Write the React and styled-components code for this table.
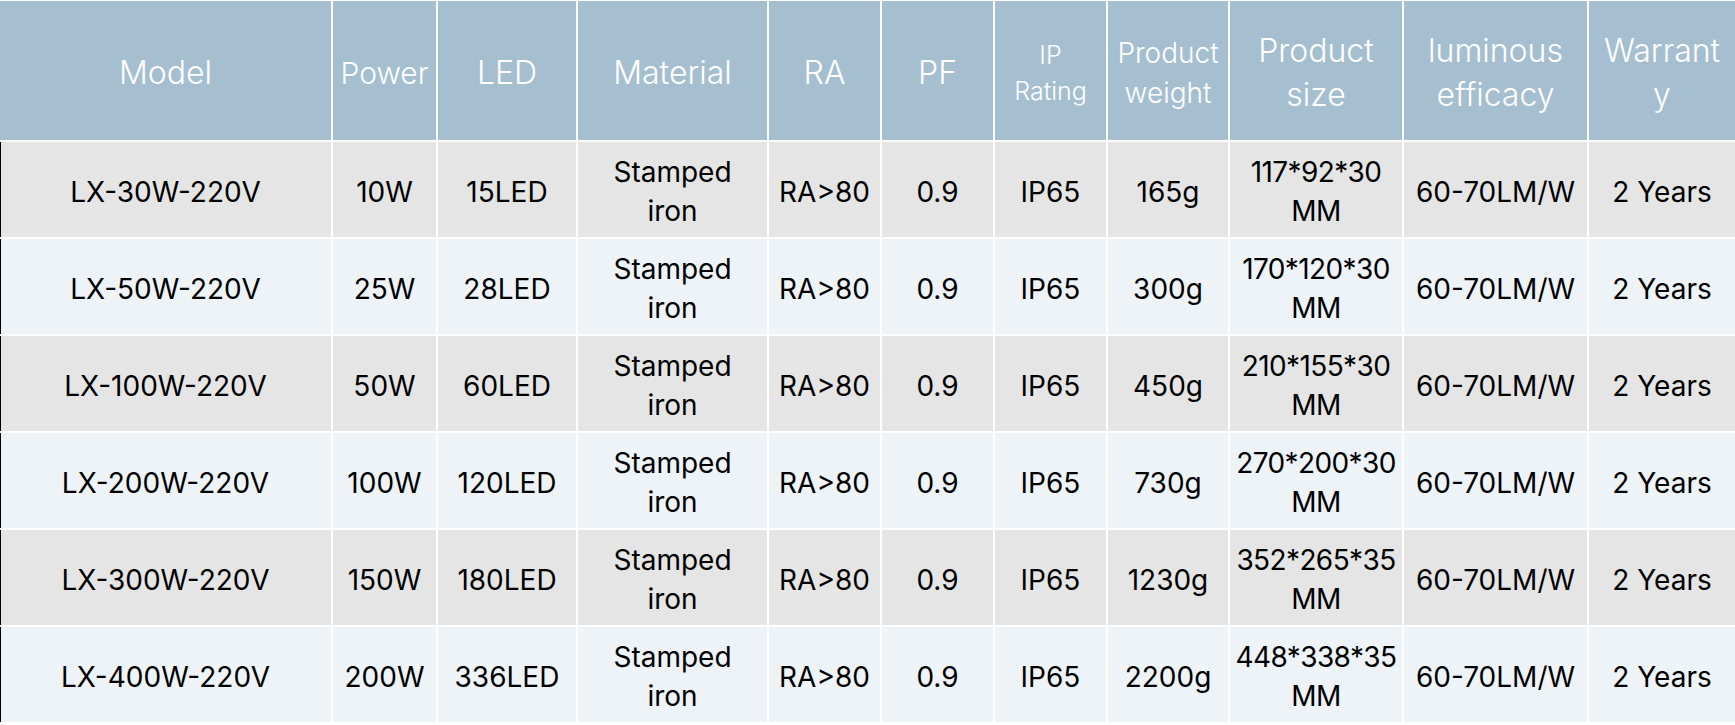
import React from "react";
import styled, { createGlobalStyle } from "styled-components";

const Global = createGlobalStyle`
  html, body { margin: 0; padding: 0; background: #ffffff; }
  body { font-family: Inter, "Noto Sans", sans-serif; }
`;

const Table = styled.div`
  display: grid;
  grid-template-columns: 331px 103px 138px 189px 111px 111px 111px 120px 172px 183px 146px;
  grid-template-rows: 139px repeat(6, 95px);
  gap: 2px;
  width: 1735px;
  height: 725px;
  overflow: hidden;
  background: #ffffff;
  padding-top: 1px;
  box-sizing: border-box;
`;

const HeadCell = styled.div`
  background: #a5bfd1;
  color: #ffffff;
  display: flex;
  align-items: center;
  justify-content: center;
  text-align: center;
  padding-top: 5px;
  box-sizing: border-box;
  font-weight: 300;
  font-size: ${(p) => p.$size || 32}px;
  line-height: ${(p) => p.$lh || 44}px;
  white-space: nowrap;
`;

const Cell = styled.div`
  background: ${(p) => (p.$alt ? "#eef3f8" : "#e5e5e5")};
  color: #000000;
  display: flex;
  align-items: center;
  justify-content: center;
  text-align: center;
  padding-top: 5px;
  box-sizing: border-box;
  font-size: 28px;
  font-weight: 400;
  line-height: 39px;
  letter-spacing: ${(p) => (p.$tight ? "-0.6px" : "normal")};
  white-space: nowrap;
  box-shadow: ${(p) => (p.$first ? "inset 1px 0 0 #000000" : "none")};
`;

const headers = [
  { t: ["Model"] },
  { t: ["Power"], size: 30 },
  { t: ["LED"] },
  { t: ["Material"] },
  { t: ["RA"] },
  { t: ["PF"] },
  { t: ["IP", "Rating"], size: 25, lh: 36 },
  { t: ["Product", "weight"], size: 28, lh: 40 },
  { t: ["Product", "size"] },
  { t: ["luminous", "efficacy"] },
  { t: ["Warrant", "y"] },
];

const rows = [
  ["LX-30W-220V", "10W", "15LED", "117*92*30", "165g"],
  ["LX-50W-220V", "25W", "28LED", "170*120*30", "300g"],
  ["LX-100W-220V", "50W", "60LED", "210*155*30", "450g"],
  ["LX-200W-220V", "100W", "120LED", "270*200*30", "730g"],
  ["LX-300W-220V", "150W", "180LED", "352*265*35", "1230g"],
  ["LX-400W-220V", "200W", "336LED", "448*338*35", "2200g"],
];

const Lines = ({ lines }) => (
  <div>
    {lines.map((l, i) => (
      <React.Fragment key={i}>
        {i > 0 && <br />}
        {l}
      </React.Fragment>
    ))}
  </div>
);

export default function App() {
  return (
    <>
      <Global />
      <Table>
        {headers.map((h, i) => (
          <HeadCell key={i} $size={h.size} $lh={h.lh}>
            <Lines lines={h.t} />
          </HeadCell>
        ))}
        {rows.map(([model, power, led, size, weight], r) => {
          const alt = r % 2 === 1;
          const cells = [
            [model],
            [power],
            [led],
            ["Stamped", "iron"],
            ["RA>80"],
            ["0.9"],
            ["IP65"],
            [weight],
            [size, "MM"],
            ["60-70LM/W"],
            ["2 Years"],
          ];
          return cells.map((c, i) => (
            <Cell key={`${r}-${i}`} $alt={alt} $first={i === 0} $tight={i === 8}>
              <Lines lines={c} />
            </Cell>
          ));
        })}
      </Table>
    </>
  );
}
